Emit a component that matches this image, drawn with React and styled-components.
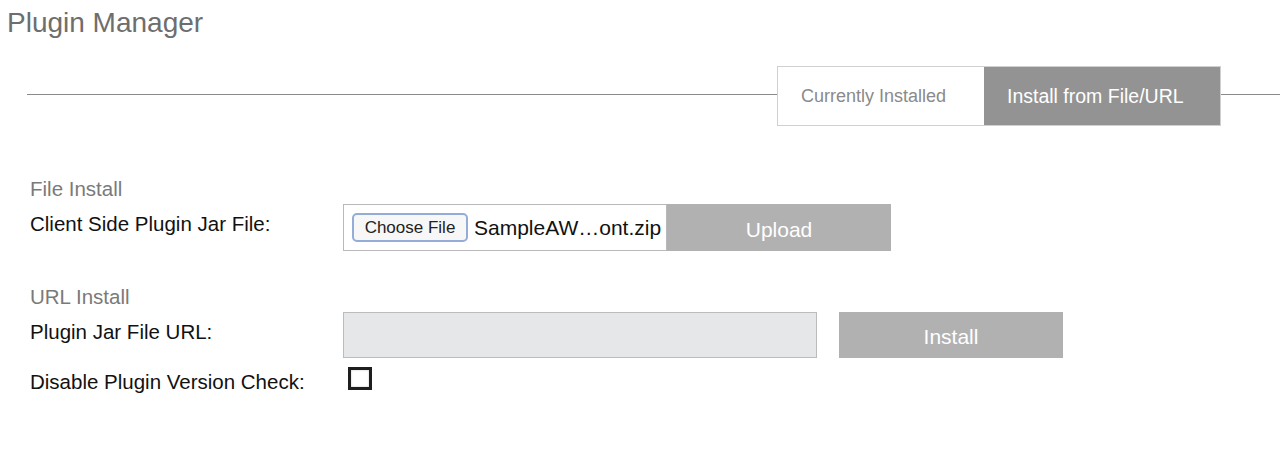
import React from "react";
import styled, { createGlobalStyle } from "styled-components";

const GlobalStyle = createGlobalStyle`
  body {
    margin: 0;
    background: #fff;
    font-family: "Liberation Sans", Arial, sans-serif;
  }
`;

export default function App() {
  return (
    <Page>
      <GlobalStyle />
      <Title>Plugin Manager</Title>
      <TabBar>
        <Rule />
        <Tabs>
          <Tab>Currently Installed</Tab>
          <Tab $active>Install from File/URL</Tab>
        </Tabs>
        <Rule $tail />
      </TabBar>

      <Form>
        <Section>
          <Heading>File Install</Heading>
          <Row>
            <Label $pt={8}>Client Side Plugin Jar File:</Label>
            <Controls>
              <FileBox>
                <ChooseButton>Choose File</ChooseButton>
                <FileName>SampleAW…ont.zip</FileName>
              </FileBox>
              <ActionButton $h={47}>Upload</ActionButton>
            </Controls>
          </Row>
        </Section>

        <Section $gap={34}>
          <Heading>URL Install</Heading>
          <Row>
            <Label $pt={8}>Plugin Jar File URL:</Label>
            <Controls $gap={22}>
              <UrlInput type="text" />
              <ActionButton $h={46}>Install</ActionButton>
            </Controls>
          </Row>
          <Row $mt={8}>
            <Label $pt={4}>Disable Plugin Version Check:</Label>
            <Checkbox />
          </Row>
        </Section>
      </Form>
    </Page>
  );
}

const Page = styled.div`
  width: 1280px;
  height: 455px;
  overflow: hidden;
`;

const Title = styled.h1`
  margin: 7px 0 0 7px;
  font-size: 28px;
  line-height: 32px;
  font-weight: 400;
  color: #6e6e6e;
`;

const TabBar = styled.div`
  display: flex;
  align-items: flex-start;
  margin-top: 27px;
  padding-left: 27px;
`;

const Rule = styled.div`
  flex: ${(p) => (p.$tail ? "0 0 59px" : "1")};
  height: 1px;
  margin-top: 28px;
  background: #8a8a8a;
`;

const Tabs = styled.div`
  display: flex;
  height: 60px;
  box-sizing: border-box;
  border: 1px solid #d0d0d0;
`;

const Tab = styled.div`
  display: flex;
  align-items: center;
  box-sizing: border-box;
  width: ${(p) => (p.$active ? "236px" : "206px")};
  padding-left: 23px;
  background: ${(p) => (p.$active ? "#939393" : "#fff")};
  color: ${(p) => (p.$active ? "#fff" : "#8a8a8a")};
  font-size: ${(p) => (p.$active ? "19.5px" : "18px")};
`;

const Form = styled.div`
  padding: 51px 0 0 30px;
`;

const Section = styled.div`
  margin-top: ${(p) => p.$gap || 0}px;
`;

const Heading = styled.div`
  font-size: 20.5px;
  line-height: 24px;
  color: #7a7a7a;
  margin-bottom: 3px;
`;

const Row = styled.div`
  display: grid;
  grid-template-columns: 313px auto;
  align-items: start;
  margin-top: ${(p) => p.$mt || 0}px;
`;

const Label = styled.div`
  padding-top: ${(p) => p.$pt}px;
  font-size: 20.5px;
  line-height: 24px;
  color: #111;
`;

const Controls = styled.div`
  display: flex;
  gap: ${(p) => p.$gap || 0}px;
`;

const FileBox = styled.div`
  display: flex;
  align-items: center;
  gap: 6px;
  box-sizing: border-box;
  width: 324px;
  height: 47px;
  padding-left: 8px;
  border: 1px solid #b9b9b9;
  background: #fff;
`;

const ChooseButton = styled.span`
  display: inline-flex;
  align-items: center;
  justify-content: center;
  box-sizing: border-box;
  width: 116px;
  height: 29px;
  border: 2px solid #94acd8;
  border-radius: 5px;
  background: #f7f7f8;
  color: #222;
  font-size: 17px;
`;

const FileName = styled.span`
  font-size: 21px;
  color: #111;
  white-space: nowrap;
`;

const ActionButton = styled.button`
  width: 224px;
  height: ${(p) => p.$h}px;
  border: none;
  background: #b1b1b1;
  color: #fff;
  font-family: inherit;
  font-size: 21px;
  padding: 0;
  padding-top: 4px;
`;

const UrlInput = styled.input`
  box-sizing: border-box;
  width: 474px;
  height: 46px;
  margin: 0;
  border: 1px solid #bcbcbc;
  background: #e6e7e9;
  outline: none;
`;

const Checkbox = styled.span`
  display: block;
  box-sizing: border-box;
  width: 24px;
  height: 23px;
  margin: 1px 0 0 5px;
  border: 3px solid #1e1e1e;
  background: #fff;
  box-shadow: inset 0 0 2px #bbb;
`;
